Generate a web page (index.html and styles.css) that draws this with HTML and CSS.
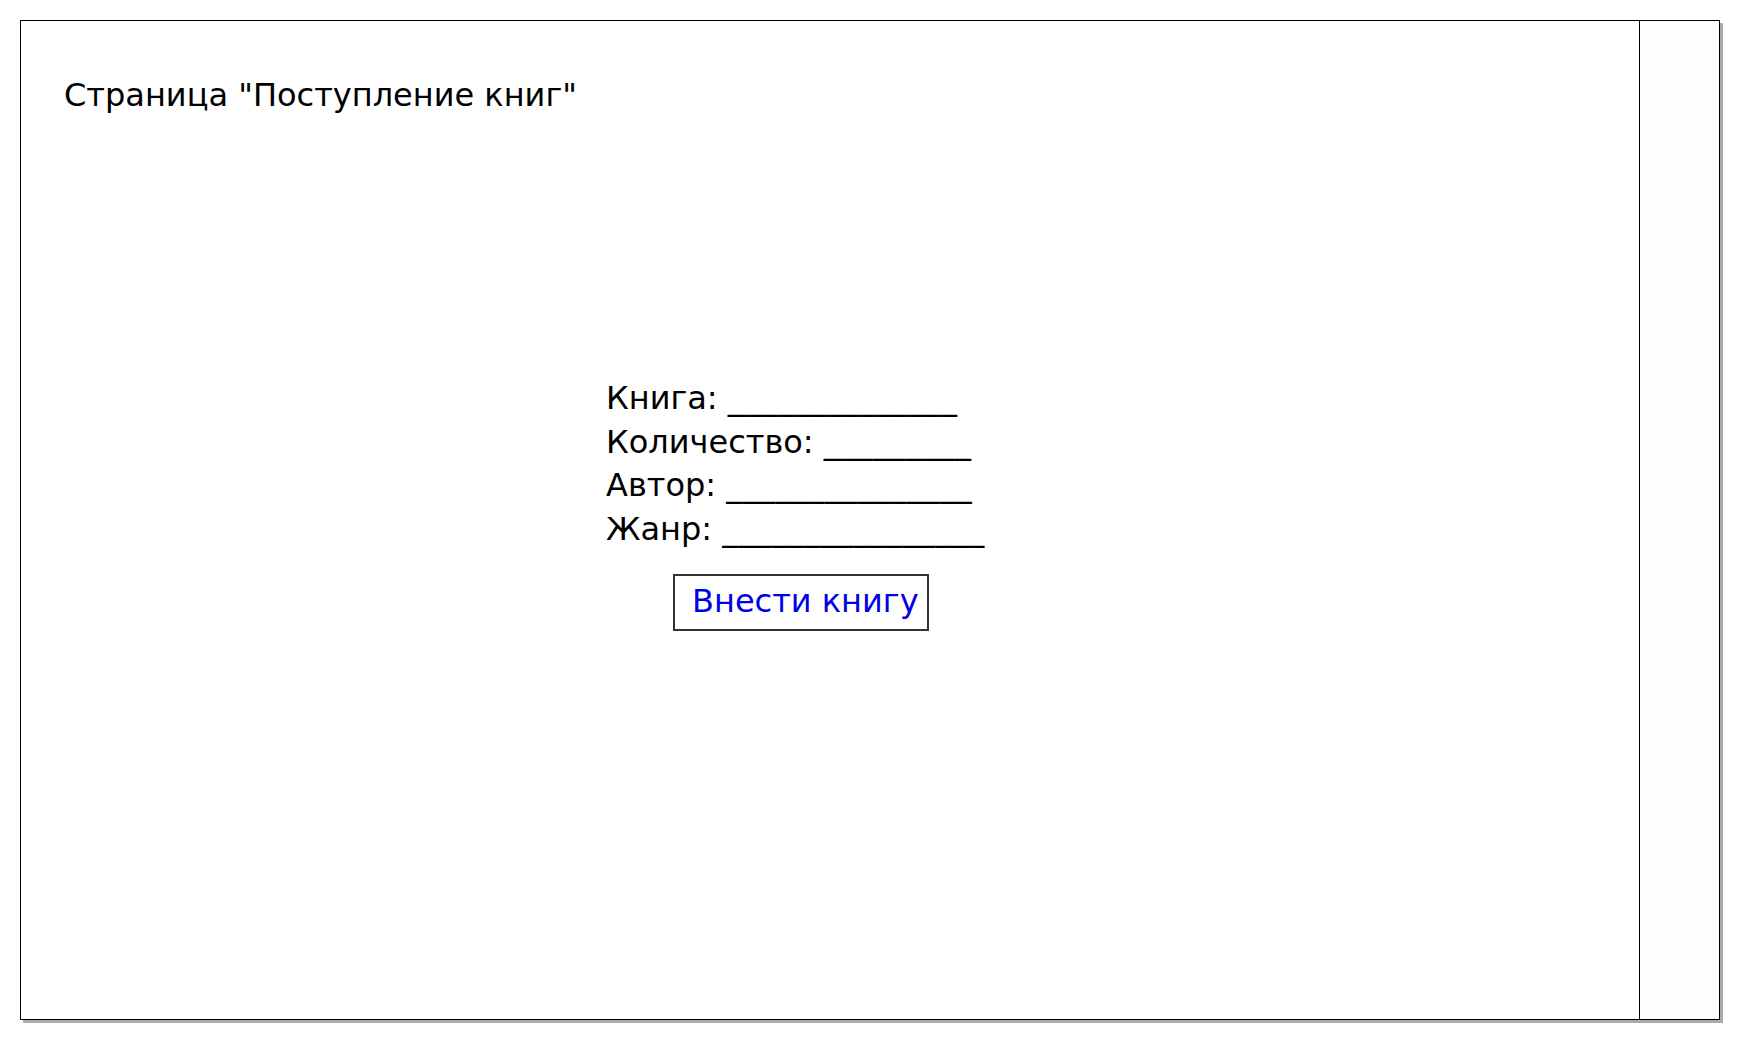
FILE: index.html
```html
<!DOCTYPE html>
<html lang="ru">
<head>
<meta charset="utf-8">
<title>Поступление книг</title>
<link rel="stylesheet" href="styles.css">
</head>
<body>
<div class="frame">
  <div class="main">
    <h1 class="title">Страница "Поступление книг"</h1>
    <div class="form">
      <div class="row">Книга: <span class="blank">______________</span></div>
      <div class="row">Количество: <span class="blank">_________</span></div>
      <div class="row">Автор: <span class="blank">_______________</span></div>
      <div class="row">Жанр: <span class="blank">________________</span></div>
      <div class="actions"><span class="button">Внести книгу</span></div>
    </div>
  </div>
  <div class="side"></div>
</div>
</body>
</html>
```
FILE: styles.css
```css
html, body {
  margin: 0;
  padding: 0;
  background: #ffffff;
}
body {
  padding: 20px;
  font-family: "DejaVu Sans", sans-serif;
  color: #000;
}
.frame {
  display: flex;
  width: 1700px;
  height: 1000px;
  box-sizing: border-box;
  border: 1px solid #000;
  box-shadow: 3px 3px 0 #a7abaf;
}
.main {
  flex: 1;
  border-right: 1px solid #000;
  padding: 0 0 0 43px;
}
.side {
  width: 79px;
  background: #fdfdfd;
}
.title {
  margin: 53px 0 0 0;
  font-size: 32px;
  font-weight: normal;
  line-height: 43px;
}
.form {
  margin: 260px 0 0 542px;
  font-size: 32px;
  line-height: 43.5px;
}
.blank {
  letter-spacing: 0.4px;
}
.actions {
  margin: 23px 0 0 67px;
}
.button {
  display: inline-block;
  border: 2px solid #333;
  padding: 4px 8px 6px 17px;
  color: #0000e6;
  line-height: 43px;
}
```
